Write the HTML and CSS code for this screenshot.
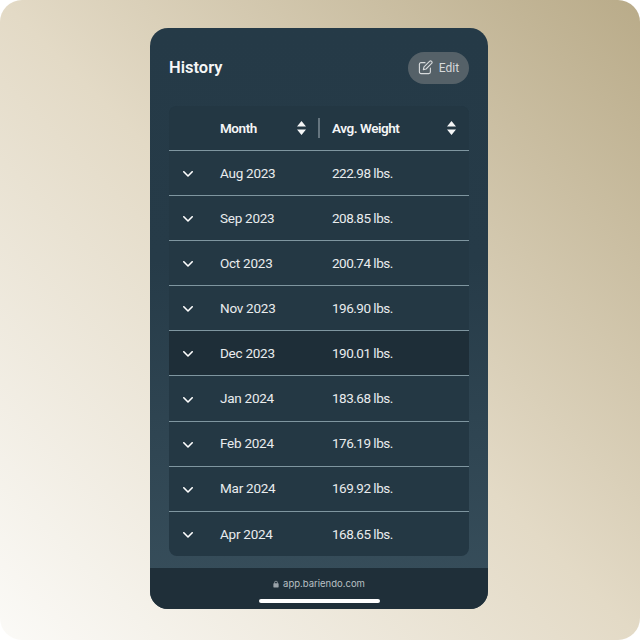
FILE: index.html
```html
<!DOCTYPE html>
<html lang="en">
<head>
<meta charset="utf-8">
<title>History</title>
<link rel="stylesheet" href="styles.css">
</head>
<body>
<main class="stage">
  <section class="phone">
    <div class="content">
      <header class="top">
        <h1 class="title">History</h1>
        <button class="edit">
          <svg class="edit-icon" viewBox="0 0 16 16" fill="none" stroke="currentColor" stroke-width="1.2" stroke-linecap="round" stroke-linejoin="round"><path d="M7.5 2.8H3.2A1.7 1.7 0 0 0 1.5 4.5v8.3a1.7 1.7 0 0 0 1.7 1.7h8.3a1.7 1.7 0 0 0 1.7-1.7V8.5"/><path d="M12.3 1.5a1.5 1.5 0 0 1 2.2 2.2L8.6 9.6l-2.9.7.7-2.9z"/></svg>
          <span>Edit</span>
        </button>
      </header>
      <div class="table">
        <div class="row head">
          <div class="cell-toggle"></div>
          <div class="cell-month th"><span>Month</span><svg class="sort" viewBox="0 0 9 14"><path d="M4.5 0 9 5.5H0zM4.5 14 0 8.5h9z"/></svg></div>
          <div class="divider"></div>
          <div class="cell-weight th"><span>Avg. Weight</span><svg class="sort" viewBox="0 0 9 14"><path d="M4.5 0 9 5.5H0zM4.5 14 0 8.5h9z"/></svg></div>
        </div>
        <div class="row"><div class="cell-toggle"><svg class="chev" viewBox="0 0 10 6"><path d="M.8.8 5 5 9.2.8"/></svg></div><div class="cell-month">Aug 2023</div><div class="cell-weight">222.98 lbs.</div></div>
        <div class="row"><div class="cell-toggle"><svg class="chev" viewBox="0 0 10 6"><path d="M.8.8 5 5 9.2.8"/></svg></div><div class="cell-month">Sep 2023</div><div class="cell-weight">208.85 lbs.</div></div>
        <div class="row"><div class="cell-toggle"><svg class="chev" viewBox="0 0 10 6"><path d="M.8.8 5 5 9.2.8"/></svg></div><div class="cell-month">Oct 2023</div><div class="cell-weight">200.74 lbs.</div></div>
        <div class="row"><div class="cell-toggle"><svg class="chev" viewBox="0 0 10 6"><path d="M.8.8 5 5 9.2.8"/></svg></div><div class="cell-month">Nov 2023</div><div class="cell-weight">196.90 lbs.</div></div>
        <div class="row active"><div class="cell-toggle"><svg class="chev" viewBox="0 0 10 6"><path d="M.8.8 5 5 9.2.8"/></svg></div><div class="cell-month">Dec 2023</div><div class="cell-weight">190.01 lbs.</div></div>
        <div class="row"><div class="cell-toggle"><svg class="chev" viewBox="0 0 10 6"><path d="M.8.8 5 5 9.2.8"/></svg></div><div class="cell-month">Jan 2024</div><div class="cell-weight">183.68 lbs.</div></div>
        <div class="row"><div class="cell-toggle"><svg class="chev" viewBox="0 0 10 6"><path d="M.8.8 5 5 9.2.8"/></svg></div><div class="cell-month">Feb 2024</div><div class="cell-weight">176.19 lbs.</div></div>
        <div class="row"><div class="cell-toggle"><svg class="chev" viewBox="0 0 10 6"><path d="M.8.8 5 5 9.2.8"/></svg></div><div class="cell-month">Mar 2024</div><div class="cell-weight">169.92 lbs.</div></div>
        <div class="row"><div class="cell-toggle"><svg class="chev" viewBox="0 0 10 6"><path d="M.8.8 5 5 9.2.8"/></svg></div><div class="cell-month">Apr 2024</div><div class="cell-weight">168.65 lbs.</div></div>
      </div>
    </div>
    <footer class="bar">
      <div class="url">
        <svg class="lock" viewBox="0 0 8 10"><path d="M1.8 4V2.8a2.2 2.2 0 0 1 4.4 0V4h.6a.7.7 0 0 1 .7.7v4.1a.7.7 0 0 1-.7.7H1.2a.7.7 0 0 1-.7-.7V4.7A.7.7 0 0 1 1.2 4zm1 0h2.4V2.8a1.2 1.2 0 0 0-2.4 0z"/></svg>
        <span>app.bariendo.com</span>
      </div>
      <div class="home"></div>
    </footer>
  </section>
</main>
</body>
</html>
```
FILE: styles.css
```css
* { box-sizing: border-box; }
html, body { margin: 0; padding: 0; background: #fff; }
.stage {
  width: 640px;
  height: 640px;
  padding: 28px 152px 31px 150px;
  border-radius: 22px;
  background: linear-gradient(225deg, #b9ab89 0%, #e3dac6 50%, #fbfaf7 100%);
  font-family: Roboto, "Liberation Sans", sans-serif;
  color: #fff;
}
.phone {
  height: 581px;
  border-radius: 18px;
  overflow: hidden;
  display: flex;
  flex-direction: column;
  background: linear-gradient(180deg, #253a47 0%, #263b48 40%, #384f5c 100%);
}
.content { flex: 1; padding: 0 19px 12px; }
.top {
  height: 78px;
  display: flex;
  align-items: center;
  justify-content: space-between;
}
.title { margin: 0; font-size: 16.5px; font-weight: 600; color: #f6f7f7; }
.edit {
  width: 61px;
  height: 32px;
  margin-top: 1px;
  border: 0;
  border-radius: 16px;
  background: #556168;
  color: #d7dadc;
  font: inherit;
  font-size: 12px;
  display: flex;
  align-items: center;
  justify-content: center;
  gap: 6px;
  padding: 0;
}
.edit-icon { width: 15px; height: 15px; }
.table {
  height: 450px;
  border-radius: 8px;
  overflow: hidden;
  background: #243844;
}
.row {
  height: 45.1px;
  display: flex;
  align-items: center;
  padding-bottom: 0.6px;
  border-top: 1px solid #7f96a0;
  font-size: 13.5px;
  letter-spacing: -0.5px;
  color: #e9ecee;
}
.row.head {
  height: 44px;
  padding-bottom: 0;
  border-top: 0;
  font-weight: 600;
  letter-spacing: -0.45px;
  color: #f4f5f6;
  background: #233743;
}
.row.active { background: #1e2e38; }
.cell-toggle { width: 51px; display: flex; justify-content: center; padding-right: 14px; }
.cell-month { width: 100px; letter-spacing: -0.25px; }
.cell-weight { flex: 1; padding-left: 12px; }
.th { display: flex; align-items: center; justify-content: space-between; }
.cell-month.th { width: 98px; padding-right: 12.5px; letter-spacing: -0.45px; }
.cell-weight.th { padding-right: 13.5px; }
.divider { width: 2px; height: 20px; background: #65757f; flex: none; }
.sort { width: 9px; height: 14px; fill: #f4f5f6; }
.chev { width: 10px; height: 6px; margin-top: 2.6px; fill: none; stroke: #fff; stroke-width: 1.6; stroke-linecap: round; stroke-linejoin: round; }
.bar {
  height: 41px;
  flex: none;
  background: #1f2f39;
  display: flex;
  flex-direction: column;
  align-items: center;
  padding-top: 9px;
}
.url {
  display: flex;
  align-items: center;
  gap: 4px;
  height: 13px;
  font-family: Inter, "Liberation Sans", sans-serif;
  font-size: 9.5px;
  color: #b9c0c4;
}
.lock { width: 6px; height: 8px; fill: #9aa3aa; }
.home { width: 121px; height: 4px; border-radius: 2px; background: #fff; margin-top: 9px; }
```
